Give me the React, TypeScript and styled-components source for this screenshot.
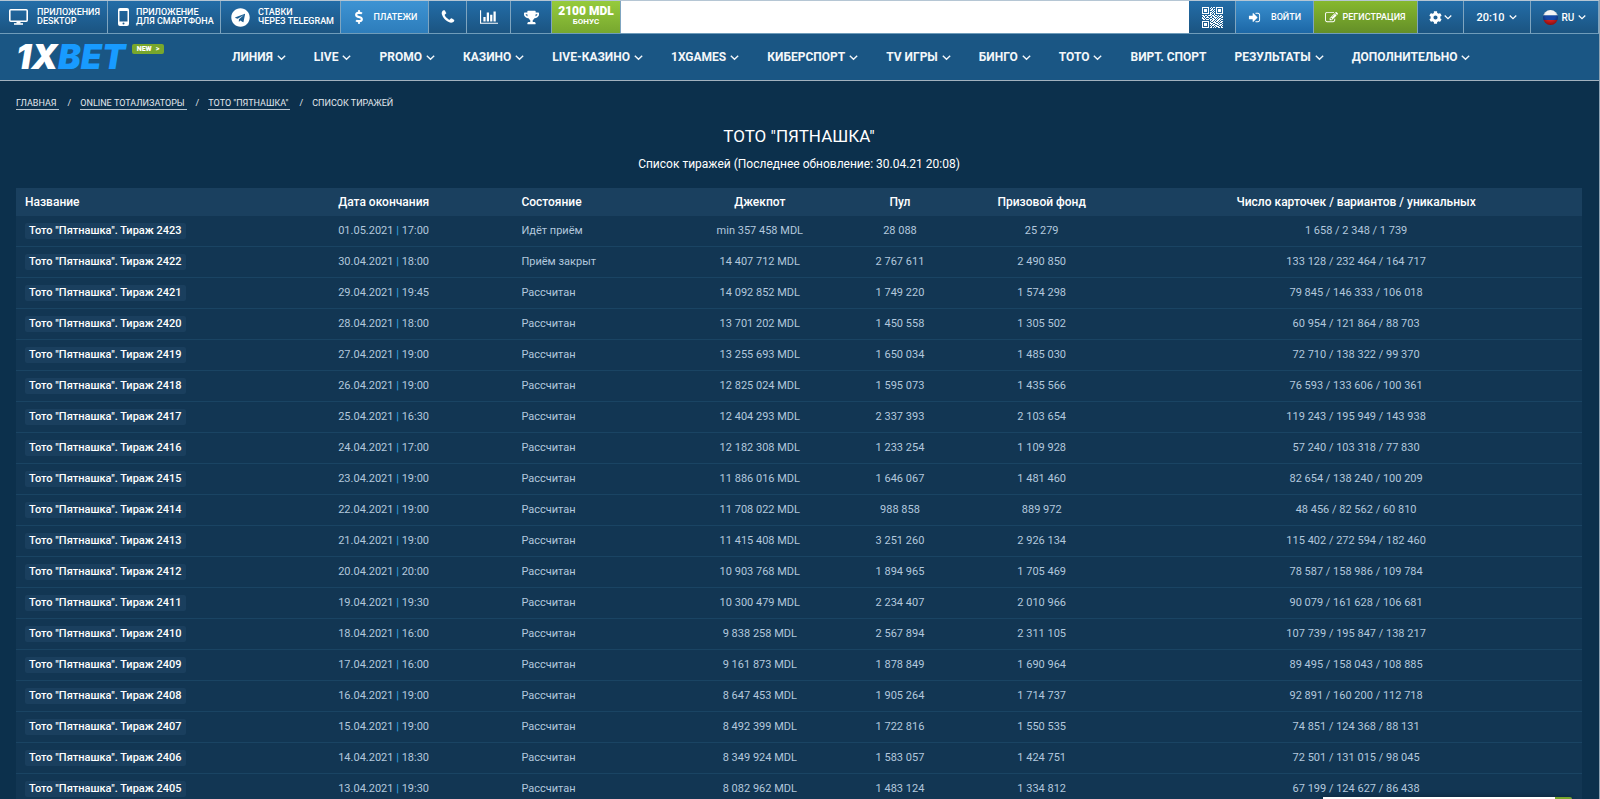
import React from "react";
import styled, { createGlobalStyle, css } from "styled-components";
import { FaCog, FaDollarSign, FaTelegram, FaTrophy } from "react-icons/fa";

const GlobalStyle = createGlobalStyle`
  *, *::before, *::after { box-sizing: border-box; }
  body {
    margin: 0;
    background: #0c304c;
    color: #fff;
    font-family: Roboto, "Liberation Sans", sans-serif;
    font-size: 12px;
  }
  button { font: inherit; color: inherit; border: 0; padding: 0; background: none; cursor: pointer; }
  a { color: inherit; text-decoration: none; }
`;

const Page = styled.div`
  min-height: 100vh;
  border-right: 1px solid #8fa3b3;
`;

/* ---------- Top bar ---------- */

const TopBar = styled.div`
  display: flex;
  height: 34px;
  border-top: 1px solid #b5c6d4;
  border-bottom: 1px solid #6f9cba;
`;

const tones = {
  base: css`background: linear-gradient(#236da8, #1b5481);`,
  bright: css`background: linear-gradient(#3a90d0, #1c67a6);`,
  pay: css`background: linear-gradient(#3d93d3, #2d7dbb);`,
  green: css`background: linear-gradient(#86b82f, #648f28);`,
  lime: css`background: linear-gradient(#96cb3c, #77a72f);`,
};

const BarButton = styled.button<{ $width: number; $tone?: keyof typeof tones; $gap?: number; $start?: number }>`
  display: flex;
  flex: none;
  align-items: center;
  justify-content: ${(p) => (p.$start ? "flex-start" : "center")};
  gap: ${(p) => p.$gap ?? 4}px;
  width: ${(p) => p.$width}px;
  padding-left: ${(p) => p.$start ?? 0}px;
  border-right: 1px solid #7fa5c0;
  white-space: nowrap;
  ${(p) => tones[p.$tone ?? "base"]}
`;

const SmallCaps = styled.span`
  font-size: 9px;
  line-height: 9px;
  font-weight: 500;
  text-align: left;
  text-transform: uppercase;
`;

const BarLabel = styled.span<{ $size?: number }>`
  font-size: ${(p) => p.$size ?? 9}px;
  font-weight: 500;
`;

const Bonus = styled.span`
  display: flex;
  flex-direction: column;
  align-items: center;
  padding-bottom: 4px;
  font-size: 8px;
  line-height: 8px;
  font-weight: 700;
`;

const BonusSum = styled.strong`
  font-size: 12px;
  line-height: 13px;
`;

const Spacer = styled.div`
  flex: 1;
  background: #fff;
`;

/* ---------- Navigation ---------- */

const NavBar = styled.header`
  display: flex;
  height: 47px;
  padding: 0 16px;
  background: #1a5684;
  border-bottom: 1px solid #a3b2bf;
  white-space: nowrap;
`;

const Brand = styled.div`
  display: flex;
  align-items: flex-start;
  flex: none;
  gap: 5px;
  width: 216px;
  padding-top: 10px;
`;

const Logo = styled.a`
  min-width: 111px;
  font-family: Inter, Roboto, sans-serif;
  font-size: 34px;
  line-height: 26px;
  font-weight: 900;
  font-style: italic;
  span { color: #189bff; }
`;

const NewBadge = styled.a`
  display: flex;
  align-items: center;
  justify-content: center;
  gap: 4px;
  width: 32px;
  height: 10px;
  border-radius: 2px;
  background: #78a72c;
  font-size: 7px;
  line-height: 10px;
  font-weight: 900;
`;

const Menu = styled.nav`
  display: flex;
  align-items: center;
  gap: 28px;
`;

const MenuLink = styled.a`
  display: flex;
  align-items: center;
  gap: 4px;
  color: #f3f7fa;
  font-size: 12px;
  line-height: 16px;
  font-weight: 700;
`;

/* ---------- Content ---------- */

const Main = styled.main`
  padding: 0 17px 0 16px;
`;

const Crumbs = styled.nav`
  display: flex;
  height: 45px;
  align-items: center;
  gap: 9px;
  font-size: 9px;
  line-height: 11px;
  text-transform: uppercase;
  color: #e3e9ee;
  a { border-bottom: 1px solid #b9c5cf; padding-right: 2px; }
`;

const Title = styled.h1`
  margin: 0;
  font-size: 17px;
  line-height: 20px;
  font-weight: 400;
  text-align: center;
`;

const Subtitle = styled.p`
  margin: 9px 0 15px;
  font-size: 12px;
  line-height: 18px;
  text-align: center;
`;

const Table = styled.table`
  width: 100%;
  table-layout: fixed;
  border-collapse: separate;
  border-spacing: 0;
  background: #123653;

  th:last-child, td:last-child { padding-right: 16px; }
`;

const Head = styled.th<{ $width: number; $left?: boolean }>`
  width: ${(p) => p.$width}%;
  height: 28px;
  padding: 0 9px;
  background: #1a405f;
  font-size: 12px;
  line-height: 16px;
  font-weight: 500;
  text-align: ${(p) => (p.$left ? "left" : "center")};
`;

const Cell = styled.td<{ $left?: boolean }>`
  height: 31px;
  padding: 0 9px;
  border-bottom: 1px solid #1a4463;
  color: #b3c8dd;
  font-size: 11px;
  line-height: 16px;
  text-align: ${(p) => (p.$left ? "left" : "center")};
  white-space: nowrap;
`;

const DrawLink = styled.a`
  display: inline-block;
  padding: 0 4px;
  border-radius: 2px;
  background: #1a3f5e;
  color: #fff;
  font-weight: 500;
`;

const Divider = styled.span`
  color: #35a3e0;
  font-weight: 500;
`;

const ChatTab = styled.button`
  position: fixed;
  right: 28px;
  bottom: 0;
  width: 249px;
  height: 2px;
  border-radius: 2px 12px 0 0;
  background: linear-gradient(90deg, #fff 232px, #78a72c 232px);
  box-shadow: 0 0 4px rgba(0, 0, 0, 0.5);
`;

/* ---------- Icons ---------- */

const Chevron = ({ size = 9 }: { size?: number }) => (
  <svg width={size} height={size} viewBox="0 0 9 9" fill="none" stroke="currentColor" strokeWidth="1.4" aria-hidden="true">
    <path d="M.8 2.8 4.500 6.300 8.200 2.800" />
  </svg>
);

const Glyph = ({ d, width, height, box = "0 0 1792 1792" }: { d: string; width: number; height: number; box?: string }) => (
  <svg width={width} height={height} viewBox={box} fill="currentColor" aria-hidden="true">
    <path d={d} />
  </svg>
);

const PHONE =
  "M1600 1240q0 27-10 70.5t-21 68.5q-21 50-122 106-94 51-186 51-27 0-53-3.5t-57.5-12.5-47-14.5-55.5-20.5-49-18q-98-35-175-83-127-79-264-216t-216-264q-48-77-83-175-3-9-18-49t-20.5-55.5-14.5-47-12.5-57.5-3.5-53q0-92 51-186 56-101 106-122 25-11 68.5-21t70.5-10q14 0 21 3 18 6 53 76 11 19 30 54t35 63.5 31 53.5q3 4 17.5 25t21.5 35.5 7 28.5q0 20-28.5 50t-62 55-62 53-28.5 46q0 9 5 22.5t8.5 20.5 14 24 11.5 19q76 137 174 235t235 174q2 1 19 11.5t24 14 20.5 8.5 22.5 5q18 0 46-28.5t53-62 55-62 50-28.5q14 0 28.5 7t35.5 21.5 25 17.5q25 15 53.5 31t63.5 35 54 30q70 35 76 53 3 7 3 21z";
const BARS =
  "M640 896v512h-256v-512h256zm384-512v1024h-256v-1024h256zm1024 1152v128h-2048v-1536h128v1408h1920zm-640-896v768h-256v-768h256zm384-384v1152h-256v-1152h256z";
const SIGN_IN =
  "M1312 896q0 26-19 45l-544 544q-19 19-45 19t-45-19-19-45v-288h-448q-26 0-45-19t-19-45v-384q0-26 19-45t45-19h448v-288q0-26 19-45t45-19 45 19l544 544q19 19 19 45zm352-352v704q0 119-84.5 203.5t-203.5 84.5h-320q-13 0-22.5-9.5t-9.5-22.5q0-4-1-20t-.5-26.5 3-23.5 10-19.5 20.5-6.5h320q66 0 113-47t47-113v-704q0-66-47-113t-113-47h-312l-11.5-1-11.5-3-8-5.5-7-9-2-13.5q0-4-1-20t-.5-26.5 3-23.5 10-19.5 20.5-6.5h320q119 0 203.5 84.5t84.5 203.5z";
const PENCIL =
  "M888 1184l116-116-152-152-116 116v56h96v96h56zm440-720q-16-16-33 1l-350 350q-17 17-1 33t33-1l350-350q17-17 1-33zm80 594v190q0 119-84.5 203.5t-203.5 84.5h-832q-119 0-203.5-84.5t-84.5-203.5v-832q0-119 84.5-203.5t203.5-84.5h832q63 0 117 25 15 7 18 23 3 17-9 29l-49 49q-14 14-32 8-23-6-45-6h-832q-66 0-113 47t-47 113v832q0 66 47 113t113 47h832q66 0 113-47t47-113v-126q0-13 9-22l64-64q15-15 35-7t20 29zm-96-738l288 288-672 672h-288v-288zm444 132l-92 92-288-288 92-92q28-28 68-28t68 28l152 152q28 28 28 68t-28 68z";

const Monitor = () => (
  <svg width="19" height="16" viewBox="0 0 19 16" fill="none" stroke="currentColor" strokeWidth="1.6" aria-hidden="true">
    <rect x=".8" y=".8" width="17.4" height="11.4" rx="1" />
    <path d="M5 15h9" />
    <path d="M7.500 13.500h4" strokeWidth="2.400" />
  </svg>
);

const Smartphone = () => (
  <svg width="11" height="18" viewBox="0 0 11 18" aria-hidden="true">
    <path
      fill="currentColor"
      fillRule="evenodd"
      d="M2 0h7a2 2 0 0 1 2 2v14a2 2 0 0 1-2 2H2a2 2 0 0 1-2-2V2a2 2 0 0 1 2-2Zm-.5 3v10.500h8V3Zm4 11.600a1 1 0 1 0 0 2 1 1 0 0 0 0-2Z"
    />
  </svg>
);

const QR_ROWS = [
  "111111100101101111111",
  "100000101010001000001",
  "101110100110101011101",
  "101110101101001011101",
  "101110100010101011101",
  "100000101101001000001",
  "111111101010101111111",
  "000000001100100000000",
  "110110111011011010110",
  "011001000101100101101",
  "101011101100111010011",
  "110100010011010101100",
  "011011101101101011011",
  "000000001011010110100",
  "111111100110101101011",
  "100000101001110010110",
  "101110101110011101001",
  "101110100101100110110",
  "101110101011011001101",
  "100000100100101110010",
  "111111101101010011011",
];

const QrCode = () => (
  <svg width="21" height="21" viewBox="0 0 21 21" fill="currentColor" shapeRendering="crispEdges" aria-hidden="true">
    {QR_ROWS.flatMap((row, y) =>
      row.split("").map((m, x) => (m === "1" ? <rect key={`${x}-${y}`} x={x} y={y} width="1" height="1" /> : null)),
    )}
  </svg>
);

const Flag = () => (
  <svg width="15" height="15" viewBox="0 0 15 15" aria-hidden="true">
    <defs>
      <clipPath id="flag-round"><circle cx="7.500" cy="7.500" r="7.500" /></clipPath>
      <radialGradient id="flag-shade" cx=".5" cy=".35" r=".65">
        <stop offset=".5" stopColor="#000" stopOpacity="0" />
        <stop offset="1" stopColor="#000" stopOpacity=".4" />
      </radialGradient>
    </defs>
    <g clipPath="url(#flag-round)">
      <path fill="#f4f4f4" d="M0 0h15v5.500H0z" />
      <path fill="#1648a8" d="M0 5.500h15v4.500H0z" />
      <path fill="#d81e1e" d="M0 10h15v5H0z" />
      <path fill="url(#flag-shade)" d="M0 0h15v15H0z" />
    </g>
  </svg>
);

/* ---------- Data ---------- */

const MENU: [string, boolean][] = [
  ["ЛИНИЯ", true], ["LIVE", true], ["PROMO", true], ["КАЗИНО", true], ["LIVE-КАЗИНО", true],
  ["1XGAMES", true], ["КИБЕРСПОРТ", true], ["TV ИГРЫ", true], ["БИНГО", true], ["ТОТО", true],
  ["ВИРТ. СПОРТ", false], ["РЕЗУЛЬТАТЫ", true], ["ДОПОЛНИТЕЛЬНО", true],
];

const COLUMNS: [string, number, boolean][] = [
  ["Название", 20, true],
  ["Дата окончания", 11.7, true],
  ["Состояние", 9.8, true],
  ["Джекпот", 12, false],
  ["Пул", 5.9, false],
  ["Призовой фонд", 12.2, false],
  ["Число карточек / вариантов / уникальных", 28.4, false],
];

const DRAWS = [
  ["2423", "01.05.2021", "17:00", "Идёт приём", "min 357 458", "28 088", "25 279", "1 658 / 2 348 / 1 739"],
  ["2422", "30.04.2021", "18:00", "Приём закрыт", "14 407 712", "2 767 611", "2 490 850", "133 128 / 232 464 / 164 717"],
  ["2421", "29.04.2021", "19:45", "Рассчитан", "14 092 852", "1 749 220", "1 574 298", "79 845 / 146 333 / 106 018"],
  ["2420", "28.04.2021", "18:00", "Рассчитан", "13 701 202", "1 450 558", "1 305 502", "60 954 / 121 864 / 88 703"],
  ["2419", "27.04.2021", "19:00", "Рассчитан", "13 255 693", "1 650 034", "1 485 030", "72 710 / 138 322 / 99 370"],
  ["2418", "26.04.2021", "19:00", "Рассчитан", "12 825 024", "1 595 073", "1 435 566", "76 593 / 133 606 / 100 361"],
  ["2417", "25.04.2021", "16:30", "Рассчитан", "12 404 293", "2 337 393", "2 103 654", "119 243 / 195 949 / 143 938"],
  ["2416", "24.04.2021", "17:00", "Рассчитан", "12 182 308", "1 233 254", "1 109 928", "57 240 / 103 318 / 77 830"],
  ["2415", "23.04.2021", "19:00", "Рассчитан", "11 886 016", "1 646 067", "1 481 460", "82 654 / 138 240 / 100 209"],
  ["2414", "22.04.2021", "19:00", "Рассчитан", "11 708 022", "988 858", "889 972", "48 456 / 82 562 / 60 810"],
  ["2413", "21.04.2021", "19:00", "Рассчитан", "11 415 408", "3 251 260", "2 926 134", "115 402 / 272 594 / 182 460"],
  ["2412", "20.04.2021", "20:00", "Рассчитан", "10 903 768", "1 894 965", "1 705 469", "78 587 / 158 986 / 109 784"],
  ["2411", "19.04.2021", "19:30", "Рассчитан", "10 300 479", "2 234 407", "2 010 966", "90 079 / 161 628 / 106 681"],
  ["2410", "18.04.2021", "16:00", "Рассчитан", "9 838 258", "2 567 894", "2 311 105", "107 739 / 195 847 / 138 217"],
  ["2409", "17.04.2021", "16:00", "Рассчитан", "9 161 873", "1 878 849", "1 690 964", "89 495 / 158 043 / 108 885"],
  ["2408", "16.04.2021", "19:00", "Рассчитан", "8 647 453", "1 905 264", "1 714 737", "92 891 / 160 200 / 112 718"],
  ["2407", "15.04.2021", "19:00", "Рассчитан", "8 492 399", "1 722 816", "1 550 535", "74 851 / 124 368 / 88 131"],
  ["2406", "14.04.2021", "18:30", "Рассчитан", "8 349 924", "1 583 057", "1 424 751", "72 501 / 131 015 / 98 045"],
  ["2405", "13.04.2021", "19:30", "Рассчитан", "8 082 962", "1 483 124", "1 334 812", "67 199 / 124 627 / 86 438"],
];

export default function App() {
  return (
    <Page>
      <GlobalStyle />
      <TopBar>
        <BarButton $width={108} $start={9} $gap={9}>
          <Monitor />
          <SmallCaps>Приложения<br />Desktop</SmallCaps>
        </BarButton>
        <BarButton $width={113} $start={10} $gap={7}>
          <Smartphone />
          <SmallCaps>Приложение<br />для смартфона</SmallCaps>
        </BarButton>
        <BarButton $width={120} $start={10} $gap={8}>
          <FaTelegram size={19} />
          <SmallCaps>Ставки<br />через Telegram</SmallCaps>
        </BarButton>
        <BarButton $width={88} $tone="pay" $gap={8}>
          <FaDollarSign size={14} />
          <BarLabel>ПЛАТЕЖИ</BarLabel>
        </BarButton>
        <BarButton $width={38} aria-label="Телефон">
          <Glyph d={PHONE} width={16} height={16} />
        </BarButton>
        <BarButton $width={44} aria-label="Статистика">
          <Glyph d={BARS} box="0 0 2048 1792" width={18} height={16} />
        </BarButton>
        <BarButton $width={41} aria-label="Результаты">
          <FaTrophy size={15} />
        </BarButton>
        <BarButton $width={69} $tone="lime">
          <Bonus><BonusSum>2100 MDL</BonusSum>БОНУС</Bonus>
        </BarButton>
        <Spacer />
        <BarButton $width={47} aria-label="QR-код">
          <QrCode />
        </BarButton>
        <BarButton $width={78} $tone="bright" $gap={10}>
          <Glyph d={SIGN_IN} width={13} height={13} />
          <BarLabel>ВОЙТИ</BarLabel>
        </BarButton>
        <BarButton $width={104} $tone="green">
          <Glyph d={PENCIL} width={13} height={13} />
          <BarLabel>РЕГИСТРАЦИЯ</BarLabel>
        </BarButton>
        <BarButton $width={46} $gap={2} aria-label="Настройки">
          <FaCog size={13} />
          <Chevron size={8} />
        </BarButton>
        <BarButton $width={67} $gap={5}>
          <BarLabel $size={11}>20:10</BarLabel>
          <Chevron size={8} />
        </BarButton>
        <BarButton $width={68}>
          <Flag />
          <BarLabel $size={10}>RU</BarLabel>
          <Chevron size={8} />
        </BarButton>
      </TopBar>

      <NavBar>
        <Brand>
          <Logo href="#">1X<span>BET</span></Logo>
          <NewBadge href="#">NEW <span>&gt;</span></NewBadge>
        </Brand>
        <Menu>
          {MENU.map(([label, arrow]) => (
            <MenuLink href="#" key={label}>
              {label}
              {arrow && <Chevron />}
            </MenuLink>
          ))}
        </Menu>
      </NavBar>

      <Main>
        <Crumbs>
          <a href="#">Главная</a>
          <span>/</span>
          <a href="#">Online тотализаторы</a>
          <span>/</span>
          <a href="#">Тото "Пятнашка"</a>
          <span>/</span>
          <span>Список тиражей</span>
        </Crumbs>
        <Title>ТОТО "ПЯТНАШКА"</Title>
        <Subtitle>Список тиражей (Последнее обновление: 30.04.21 20:08)</Subtitle>
        <Table>
          <thead>
            <tr>
              {COLUMNS.map(([label, width, left]) => (
                <Head key={label} $width={width} $left={left}>{label}</Head>
              ))}
            </tr>
          </thead>
          <tbody>
            {DRAWS.map(([id, date, time, state, jackpot, pool, fund, cards]) => (
              <tr key={id}>
                <Cell $left><DrawLink href="#">Тото "Пятнашка". Тираж {id}</DrawLink></Cell>
                <Cell $left>{date} <Divider>|</Divider> {time}</Cell>
                <Cell $left>{state}</Cell>
                <Cell>{jackpot} MDL</Cell>
                <Cell>{pool}</Cell>
                <Cell>{fund}</Cell>
                <Cell>{cards}</Cell>
              </tr>
            ))}
          </tbody>
        </Table>
      </Main>
      <ChatTab aria-label="Чат" />
    </Page>
  );
}
